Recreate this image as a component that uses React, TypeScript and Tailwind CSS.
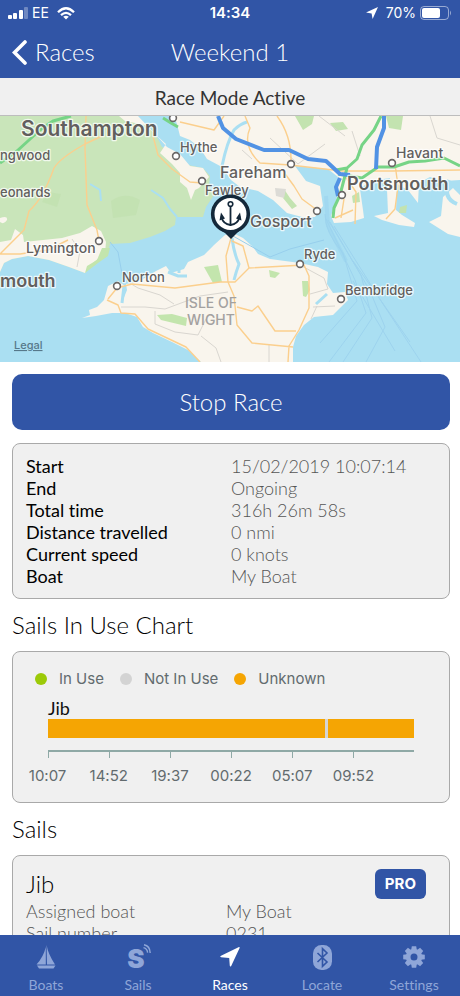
import React from "react";

const raceInfo = [
  { label: "Start", value: "15/02/2019 10:07:14" },
  { label: "End", value: "Ongoing" },
  { label: "Total time", value: "316h 26m 58s" },
  { label: "Distance travelled", value: "0 nmi" },
  { label: "Current speed", value: "0 knots" },
  { label: "Boat", value: "My Boat" },
];

const sailInfo = [
  { label: "Assigned boat", value: "My Boat" },
  { label: "Sail number", value: "0231" },
];

const ticks = ["10:07", "14:52", "19:37", "00:22", "05:07", "09:52"];

const segments = [
  { grow: 278, color: "bg-[#f5a503]" },
  { grow: 3, color: "bg-[#d5d5d5]" },
  { grow: 86, color: "bg-[#f5a503]" },
];

const towns = [
  { x: 173, y: 2 },
  { x: 176, y: 40 },
  { x: 202, y: 65 },
  { x: 291, y: 48 },
  { x: 392, y: 47 },
  { x: 342, y: 79 },
  { x: 317, y: 95 },
  { x: 99, y: 125 },
  { x: 117, y: 170 },
  { x: 300, y: 148 },
  { x: 341, y: 183 },
];

const mapLabels = [
  { name: "Southampton", x: 21, y: 20, size: 21, weight: 600 },
  { name: "ngwood", x: 0, y: 44, size: 13, weight: 500 },
  { name: "eonards", x: 0, y: 81, size: 13, weight: 500 },
  { name: "Hythe", x: 180, y: 36, size: 13, weight: 500 },
  { name: "Fareham", x: 220, y: 62, size: 16, weight: 500 },
  { name: "Fawley", x: 205, y: 79, size: 13, weight: 500 },
  { name: "Havant", x: 396, y: 42, size: 14, weight: 500 },
  { name: "Portsmouth", x: 347, y: 74, size: 18, weight: 600 },
  { name: "Gosport", x: 250, y: 111, size: 16, weight: 500 },
  { name: "Lymington", x: 26, y: 137, size: 14, weight: 500 },
  { name: "mouth", x: 0, y: 171, size: 18, weight: 600 },
  { name: "Norton", x: 122, y: 166, size: 13, weight: 500 },
  { name: "Ryde", x: 304, y: 143, size: 13, weight: 500 },
  { name: "Bembridge", x: 345, y: 179, size: 13, weight: 500 },
];

const StatusBar = () => (
  <div className="flex h-[26px] items-center px-2 font-['Inter',sans-serif] text-sm text-white">
    <div className="flex flex-1 items-center gap-1">
      <svg width="20" height="12" viewBox="0 0 20 12" fill="white">
        <rect x="0" y="8" width="4" height="4" rx="1" />
        <rect x="5" y="6" width="4" height="6" rx="1" />
        <rect x="11" y="3" width="4" height="9" rx="1" />
        <rect x="16" y="0" width="4" height="12" rx="1" opacity="0.3" />
      </svg>
      <span>EE</span>
      <svg className="ml-1" width="18" height="13" viewBox="0 0 18 13" fill="none" stroke="white" strokeWidth="2.3">
        <path d="M1 5.2 Q9 -2.6 17 5.2" />
        <path d="M4 8.2 Q9 3.6 14 8.2" />
        <path d="M9 12.6 L6.2 9.8 Q9 7.6 11.8 9.8 Z" fill="white" stroke="none" />
      </svg>
    </div>
    <span className="text-[15px] font-semibold">14:34</span>
    <div className="flex flex-1 items-center justify-end gap-1">
      <svg className="mr-1" width="12" height="12" viewBox="0 0 12 12" fill="white">
        <path d="M12 0 L6.6 12 L5.6 6.4 L0 5.4 Z" />
      </svg>
      <span>70%</span>
      <svg width="32" height="14" viewBox="0 0 32 14">
        <rect x="0.5" y="0.5" width="28" height="13" rx="3.5" fill="none" stroke="white" strokeOpacity="0.5" />
        <rect x="2" y="2" width="18" height="10" rx="2" fill="white" />
        <path d="M30 4.5 Q32 7 30 9.5 Z" fill="white" fillOpacity="0.5" />
      </svg>
    </div>
  </div>
);

const AnchorPin = () => (
  <g>
    <path d="M220 112 L231 123 L242 112 Z" fill="#14283a" />
    <circle cx="230.5" cy="98" r="17.8" fill="#fff" stroke="#14283a" strokeWidth="3.6" />
    <g fill="none" stroke="#14283a" strokeWidth="1.8" strokeLinecap="round">
      <circle cx="230.5" cy="88" r="2.3" strokeWidth="1.6" />
      <path d="M230.5 91 V109" />
      <path d="M221.5 101 Q223 108 230.5 109 Q238 108 239.5 101" />
    </g>
    <path d="M221 96.5 L225 102.5 L219.5 104.5 Z M240 96.5 L236 102.5 L241.5 104.5 Z" fill="#14283a" />
  </g>
);

const RaceMap = () => (
  <svg
    className="block h-[246px] w-full font-['Inter',sans-serif]"
    viewBox="0 0 460 246"
    preserveAspectRatio="xMidYMid slice"
    role="img"
    aria-label="Race map"
  >
    <rect width="460" height="246" fill="#aadff2" />

    {/* mainland */}
    <path
      d="M0 0 H132 L148 9 L158 23 L162 31 L176 36 L188 49 L203 52 L210 60 L209 70 L214 79 L206 91 L203 101 H176 L175 109 L165 115 L150 121 L130 127 L110 128 L108 137 L100 145 L91 147 L85 157 L69 151 L49 144 L28 140 L12 143 L4 147 L0 156 Z"
      fill="#c9e5ba"
    />
    <path
      d="M0 126 L11 124 L15 113 L23 119 L24 126 L62 122 L80 117 L92 110 L101 115 L106 126 L105 137 L94 146 L85 157 L69 151 L49 144 L28 140 L12 143 L4 147 L0 156 Z M119 0 H138 L157 20 L167 31 L180 38 L190 50 L203 52 L209 61 L199 72 L195 74 L191 84 L187 72 L180 66 L180 57 L172 48 L160 37 L166 28 L145 9 L125 5 Z M0 102 Q8 99 7 104 Q4 109 0 106 Z"
      fill="#f9f5ed"
    />
    <path d="M85 157 L87 150 L97 144 L102 132 L110 132 L108 140 L98 147 Z" fill="#c3e5ad" />
    <path
      d="M174 0 H460 V64 L445 65 L430 61 L419 67 L418 87 L408 74 L397 68 L396 94 L402 99 L415 107 L414 111 L399 109 L382 104 L374 100 L388 97 L387 73 L390 62 L370 65 L360 73 L363 94 L364 102 L351 106 L334 107 L331 100 L337 81 L338 61 L328 53 L295 50 L306 65 L320 70 L323 90 L315 101 L302 101 L287 97 L273 84 L258 75 L240 71 L231 64 L222 51 L207 43 L200 32 L190 24 L180 20 L177 8 Z"
      fill="#f9f5ed"
    />
    <path d="M429 106 L441 100 L443 81 L453 72 L460 79 V121 L448 118 Z" fill="#f9f5ed" />
    <path d="M449 64 Q442 82 457 88 M427 63 Q436 75 433 93" fill="none" stroke="#aadff2" strokeWidth="4" />
    <path d="M222 50 Q227 26 234 14 Q240 8 247 6" fill="none" stroke="#aadff2" strokeWidth="3" />
    <path d="M295 0 L314 0 L312 8 L303 14 Z M330 7 L343 6 L348 13 L336 15 Z M386 0 H403 L401 14 L389 12 Z M284 73 L290 82 L297 90 L292 93 L283 82 Z M352 80 L359 76 L360 86 L353 87 Z M400 91 L407 89 L406 97 L399 97 Z" fill="#c3e3b0" />
    <path d="M275 72 L286 73 L284 82 L276 80 Z" fill="#dcdbd6" />
    <path d="M111 85 Q125 75 140 84 L136 99 L113 102 Z M47 76 L61 78 L57 91 L42 86 Z" fill="#bfdfae" opacity="0.6" />
    <path d="M90 68 L100 74 L101 85 M151 74 L163 82 L170 93 L177 101" fill="none" stroke="#aadff2" strokeWidth="2" />

    {/* Isle of Wight */}
    <path
      d="M82 202 L90 199 L89 194 L97 191 L104 184 L108 170 L118 165 L125 170 L123 184 L127 174 L126 168 L140 165 L156 155 L166 150 L171 157 L184 153 L188 146 L204 139 L214 129 L225 119 L233 117 L243 122 L253 131 L258 138 L270 143 L300 147 L318 151 L328 156 L327 168 L333 177 L345 176 L348 184 L341 191 L333 199 L314 201 L304 209 L296 220 L293 231 V246 H201 L188 234 L172 226 L153 217 L143 211 L137 201 L125 197 L112 197 L96 200 Z"
      fill="#f9f5ed"
    />
    <path d="M232 122 Q234 138 239 148 Q236 156 234 164 M168 156 L178 160 L187 160 M179 151 V157 M316 188 L327 178 M124 170 L122 187" fill="none" stroke="#aadff2" strokeWidth="3" />
    <path d="M204 151 L218 149 L222 166 L213 167 Z M157 199 L172 198 L187 202 L186 210 L161 204 Z M269 154 L280 157 L275 162 L270 161 Z M302 165 L308 165 L310 174 L306 181 L303 180 Z" fill="#c3e5ad" />

    {/* minor roads */}
    <g fill="none" stroke="#d9d6d0" strokeWidth="1">
      <path d="M128 166 L138 172 L160 179 L174 188 M121 191 H145 L165 193 L200 180 L228 176 M155 195 V208 L175 216 L198 219 L206 203 M201 220 L216 232 L221 246 M269 228 V246 M300 149 L324 162 L328 173 L310 178 M313 191 L335 190 M311 203 L317 190" />
      <path d="M242 34 L252 43 M270 22 L298 48 L325 28 M319 0 L345 20 M430 0 L437 22 L460 29 M352 15 L360 40 M72 123 L80 135 L77 151" />
    </g>

    {/* A roads */}
    <g fill="none" stroke="#fbcf8d" strokeWidth="1.4" strokeLinejoin="round">
      <path d="M86 0 L85 32 L87 89 L97 114 L99 125 M85 28 Q60 42 54 52 Q43 83 29 95 L24 114 L0 138 H20 L48 134 L68 124 M85 28 L102 20 M153 20 L158 39 L172 53 L190 66 L202 67" />
      <path d="M180 6 L214 14 L224 0 M277 0 Q292 20 291 48 M245 0 L250 12 Q242 30 260 47 L290 49 L342 55 H392 L460 54 M283 55 L294 70 L302 83 L317 94 M395 48 L398 70 L395 93 L386 103 M345 60 L356 76 L355 108 M335 102 L353 94 M344 83 L341 102" />
      <path d="M108 183 L117 172 L132 168 L175 172 L220 166 L235 166 L249 152 L304 149 L309 160 V192 L299 214 L289 230 L288 246 M231 122 L226 140 L228 166 L234 180 L237 209 L252 227 L293 231 M237 191 L252 195 L258 190 L275 215 H296 M107 184 L118 189 L121 197 L135 198 L148 213 L186 231 L200 246 M232 125 L243 130 L249 152" />
    </g>

    {/* green trunk roads */}
    <g fill="none" stroke="#76d486" strokeWidth="3" strokeLinejoin="round">
      <path d="M71 0 L53 5 L40 14 L17 35 L0 47 M163 2 L171 7 L178 11" />
      <path d="M381 0 L374 14 L362 29 L357 43 L347 52 L336 54 M347 52 L340 79 L334 92 L333 102" />
      <path d="M338 58 L362 62 L378 51 L394 51 L409 46 L425 45 L444 42 L460 50" />
    </g>

    {/* motorways */}
    <g fill="none" stroke="#5192e4" strokeWidth="4" strokeLinejoin="round">
      <path d="M218 0 L223 12 L236 23 L264 34 H289 L308 43 L326 45 L340 58 L350 59" />
      <path d="M384 0 V12 L377 31 L376 53 M340 62 L336 71 L338 80" />
    </g>

    {/* ferry lanes */}
    <path d="M325 98 Q325 117 343 137 L357 185 L320 227 M326 103 L355 164 L366 197 L329 246 M328 104 L361 159 L372 202 L343 246 M330 106 L370 175 L385 211 L366 246 M334 110 L383 188 L421 246 M353 145 L410 226 M353 165 L395 235" fill="none" stroke="#9dd3ee" strokeWidth="1" />
    <path d="M326 80 L328 110 L346 145" fill="none" stroke="#9bd3ef" strokeWidth="4" opacity="0.6" />
    <path d="M110 126 L118 136 L123 163 M233 120 L270 141 L290 133 L324 124" fill="none" stroke="#97cfed" strokeWidth="1" />

    {towns.map((t, i) => (
      <circle key={i} cx={t.x} cy={t.y} r="3.4" fill="#fff" stroke="#6a6766" strokeWidth="1.6" />
    ))}

    {mapLabels.map((l) => (
      <text
        key={l.name}
        x={l.x}
        y={l.y}
        fontSize={l.size}
        fontWeight={l.weight}
        fill="#625f5e"
        stroke="#fff"
        strokeOpacity="0.75"
        strokeWidth="2.5"
        strokeLinejoin="round"
        paintOrder="stroke"
      >
        {l.name}
      </text>
    ))}
    <g fill="#a3a1a0" fontSize="14" fontWeight="500" textAnchor="middle">
      <text x="211" y="192">ISLE OF</text>
      <text x="211" y="209">WIGHT</text>
    </g>
    <text x="14" y="233" fontSize="11" fontWeight="500" fill="#56788a" textDecoration="underline">
      Legal
    </text>
    <AnchorPin />
  </svg>
);

const Legend = ({ color, children }: { color: string; children: React.ReactNode }) => (
  <li className="flex items-center gap-3">
    <span className={`size-3 rounded-full ${color}`} />
    {children}
  </li>
);

const SailsChart = () => (
  <div className="mr-[10px] ml-3 h-[152px] rounded-lg border border-[#a9a9a9] bg-[#f0f0f0] pt-4 font-['Inter',sans-serif] text-[15px] text-[#626b6e]">
    <ul className="flex gap-4 pl-[22px] leading-[22px]">
      <Legend color="bg-[#9cca08]">In Use</Legend>
      <Legend color="bg-[#d3d3d3]">Not In Use</Legend>
      <Legend color="bg-[#f5a503]">Unknown</Legend>
    </ul>
    <div className="mx-[35px]">
      <p className="mt-[7px] font-['Lato',sans-serif] text-lg leading-[22px] text-[#111]">Jib</p>
      <div className="flex h-[19px]">
        {segments.map((s, i) => (
          <div key={i} className={s.color} style={{ flexGrow: s.grow }} />
        ))}
      </div>
      <div className="mt-3 grid h-2 grid-cols-6 border-t-2 border-[#8fa9a6]">
        {ticks.map((t) => (
          <span key={t} className="border-l border-[#8fa9a6]" />
        ))}
      </div>
    </div>
    <div className="mt-2 mr-[65px] ml-1 grid grid-cols-6 text-center leading-5">
      {ticks.map((t) => (
        <span key={t}>{t}</span>
      ))}
    </div>
  </div>
);

const BoatIcon = () => (
  <svg width="20" height="24" viewBox="0 0 20 24" fill="currentColor">
    <path d="M10.6 0 Q12 9 19 19.4 H11 Z" />
    <path d="M9.8 2 V19.4 H0.5 Q7.5 12 9.8 2 Z" />
    <path d="M1 20.4 H19.5 L17.5 23.6 H3 Z" />
  </svg>
);

const SailIcon = () => (
  <svg width="26" height="26" viewBox="0 0 26 26">
    <text x="11" y="24" fontSize="26" fontWeight="900" textAnchor="middle" fill="currentColor" fontFamily="Inter, sans-serif">
      S
    </text>
    <g fill="none" stroke="currentColor" strokeWidth="1.4">
      <path d="M19 0.8 Q25 2 25.2 9" />
      <path d="M18.5 3.6 Q22.3 4.6 22.6 8.6" />
    </g>
  </svg>
);

const ArrowIcon = () => (
  <svg width="20" height="20" viewBox="0 0 20 20" fill="currentColor">
    <path d="M19 0 Q20 0 19.6 1 L11.2 19 Q10.2 20.2 9.8 18.8 L9.2 11 L1 10.2 Q-0.6 9.6 1 8.7 Z" />
  </svg>
);

const BluetoothIcon = () => (
  <svg width="19" height="25" viewBox="0 0 19 25">
    <rect width="19" height="25" rx="8.5" fill="currentColor" />
    <path d="M4.5 8 L14 17 L9.5 21.3 V3.7 L14 8 L4.5 17" fill="none" stroke="#3155a6" strokeWidth="1.6" />
  </svg>
);

const GearIcon = () => (
  <svg width="22" height="22" viewBox="-11 -11 22 22">
    <circle r="5.8" fill="none" stroke="currentColor" strokeWidth="4.6" />
    {[0, 45, 90, 135, 180, 225, 270, 315].map((a) => (
      <path key={a} d="M-2.8 -7 L-2.2 -10.8 H2.2 L2.8 -7 Z" fill="currentColor" transform={`rotate(${a})`} />
    ))}
  </svg>
);

const tabs = [
  { name: "Boats", icon: <BoatIcon /> },
  { name: "Sails", icon: <SailIcon /> },
  { name: "Races", icon: <ArrowIcon />, active: true },
  { name: "Locate", icon: <BluetoothIcon /> },
  { name: "Settings", icon: <GearIcon /> },
];

const App = () => {
  return (
    <div className="flex h-screen flex-col overflow-hidden bg-white font-['Lato',sans-serif] text-black [font-variant-ligatures:none]">
      <header className="shrink-0 bg-[#3155a6] text-white">
        <StatusBar />
        <div className="grid h-[52px] grid-cols-[1fr_auto_1fr] items-center px-3">
          <button className="flex items-center gap-2 text-2xl font-light">
            <svg width="15" height="25" viewBox="0 0 15 25" fill="none" stroke="white" strokeWidth="3.6" strokeLinecap="round">
              <path d="M13 2 L2.5 12.5 L13 23" />
            </svg>
            Races
          </button>
          <h1 className="text-2xl font-light">Weekend 1</h1>
        </div>
      </header>

      <main className="min-h-0 flex-1 overflow-y-auto [scrollbar-width:none]">
        <p className="h-[38px] border-b border-[#bdbdbd] bg-[#f0f0f0] text-center text-[19px] leading-[39px] text-[#333]">
          Race Mode Active
        </p>
        <RaceMap />

        <div className="mt-3 mr-[10px] ml-3">
          <button className="h-[56px] w-full rounded-[10px] bg-[#3155a6] text-2xl font-light text-white">
            Stop Race
          </button>
        </div>

        <dl className="mt-[13px] mr-[10px] ml-3 grid grid-cols-2 rounded-lg border border-[#a9a9a9] bg-[#f0f0f0] px-[13px] py-[11px] text-lg leading-[22px]">
          {raceInfo.map((r) => (
            <React.Fragment key={r.label}>
              <dt>{r.label}</dt>
              <dd className="font-light text-[#555]">{r.value}</dd>
            </React.Fragment>
          ))}
        </dl>

        <h2 className="mx-3 my-3 text-2xl leading-7 font-light">Sails In Use Chart</h2>
        <SailsChart />

        <h2 className="mx-3 my-3 text-2xl leading-7 font-light">Sails</h2>
        <section className="mr-[10px] ml-3 rounded-lg border border-[#a9a9a9] bg-[#f0f0f0] px-[13px] pt-3 pb-4">
          <div className="flex items-center justify-between pr-[10px]">
            <h3 className="text-2xl font-light">Jib</h3>
            <span className="rounded-md bg-[#3155a6] px-[10px] font-['Inter',sans-serif] text-[15px] leading-[30px] font-bold text-white">
              PRO
            </span>
          </div>
          <dl className="grid grid-cols-[200px_1fr] text-lg leading-[22px] font-light text-[#555]">
            {sailInfo.map((s) => (
              <React.Fragment key={s.label}>
                <dt>{s.label}</dt>
                <dd>{s.value}</dd>
              </React.Fragment>
            ))}
          </dl>
        </section>
      </main>

      <nav className="grid h-[61px] shrink-0 grid-cols-5 bg-[#3155a6]">
        {tabs.map((t) => (
          <a
            key={t.name}
            href="#"
            className={`flex flex-col items-center pt-2 text-sm ${t.active ? "text-white" : "text-[#8fa6d8]"}`}
          >
            <span className="flex h-7 items-center">{t.icon}</span>
            <span className="mt-1 leading-5">{t.name}</span>
          </a>
        ))}
      </nav>
    </div>
  );
};

export default App;
